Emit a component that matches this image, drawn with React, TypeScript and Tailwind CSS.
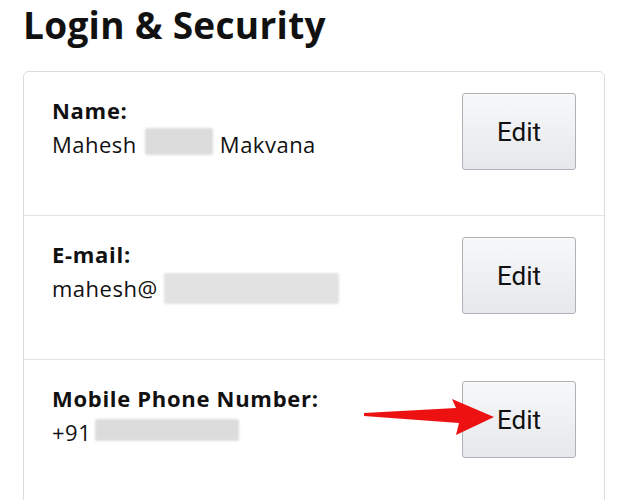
import React from 'react';

type Row = {
  label: string;
  value: React.ReactNode;
  height: string;
};

const font = { fontFamily: '"Open Sans", "Liberation Sans", sans-serif' };
const btnFont = { fontFamily: 'Roboto, "Liberation Sans", sans-serif' };

function Blur({ className }: { className: string }) {
  return <span className={`inline-block shrink-0 rounded-[2px] bg-[#dcdcdc] blur-[1px] ${className}`} />;
}

function EditButton() {
  return (
    <button
      className="flex h-[77px] w-[114px] shrink-0 items-center justify-center rounded-[3px] border border-[#adb1b8] bg-gradient-to-b from-[#f7f8fa] to-[#e6e8eb] text-[26px] leading-none text-[#111] shadow-[inset_0_1px_0_rgba(255,255,255,0.7)]"
      style={btnFont}
    >
      Edit
    </button>
  );
}

export default function App() {
  const rows: Row[] = [
    {
      label: 'Name:',
      height: 'h-[143px]',
      value: (
        <div className="flex items-start">
          <span>Mahesh</span>
          <Blur className="ml-[8px] mr-[7px] mt-[1px] h-[27px] w-[68px]" />
          <span>Makvana</span>
        </div>
      ),
    },
    {
      label: 'E-mail:',
      height: 'h-[144px]',
      value: (
        <div className="flex items-start">
          <span>mahesh@</span>
          <Blur className="ml-[6px] mt-[2px] h-[31px] w-[175px] bg-[#e2e2e2]" />
        </div>
      ),
    },
    {
      label: 'Mobile Phone Number:',
      height: 'h-[170px]',
      value: (
        <div className="flex items-start">
          <span>+91</span>
          <Blur className="ml-[4px] mt-[4px] h-[22px] w-[144px]" />
        </div>
      ),
    },
  ];

  return (
    <div className="relative h-[500px] w-[627px] overflow-hidden bg-white text-[#111]" style={font}>
      <h1 className="ml-[23px] text-[37px] font-bold leading-[50px] tracking-[0.3px]">Login &amp; Security</h1>

      <div className="ml-[23px] mt-[21px] w-[582px] rounded-[6px] border border-[#dcdcdc]">
        {rows.map((row, i) => (
          <div
            key={row.label}
            className={`flex items-start justify-between pl-[28px] pr-[28px] pt-[21px] ${row.height} ${i > 0 ? 'border-t border-[#e4e4e4]' : ''}`}
          >
            <div className="text-[22px] leading-[34px] tracking-[0.5px]">
              <div className="font-bold tracking-[0.7px]">{row.label}</div>
              {row.value}
            </div>
            <EditButton />
          </div>
        ))}
      </div>

      {/* red pointer arrow */}
      <svg className="pointer-events-none absolute left-0 top-0" width="627" height="500" viewBox="0 0 627 500">
        <polygon
          points="364,413 456,408 452,399 494,417 456,435 459,423 364,416"
          fill="#ee1111"
        />
      </svg>
    </div>
  );
}
